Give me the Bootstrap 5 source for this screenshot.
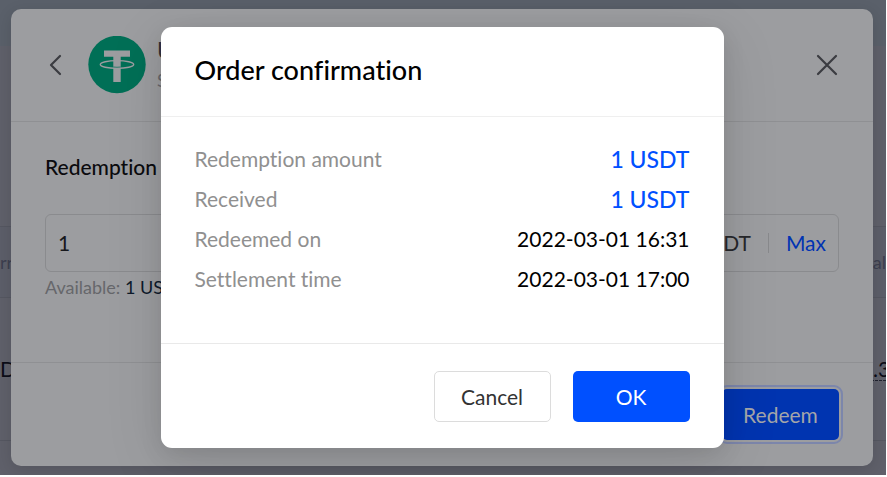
<!DOCTYPE html>
<html lang="en">
<head>
<meta charset="utf-8">
<meta name="viewport" content="width=device-width, initial-scale=1">
<title>Order confirmation</title>
<link href="https://cdn.jsdelivr.net/npm/bootstrap@5.3.0/dist/css/bootstrap.min.css" rel="stylesheet">
<style>
  body { font-family: Lato, "Open Sans", sans-serif; font-size: 21px; line-height: 30px; font-variant-ligatures: none; padding: 0 1px 2px 0; background: #fff; }
  .screen { min-height: calc(100vh - 2px); background: #5f606a; }
  .page-band { height: 46px; background: #5a606a; }
  .page-gap { height: 180px; }
  .holdings { table-layout: fixed; border-top: 1px solid #555761; color: #0c0d18; }
  .holdings th, .holdings td { padding: 0; border-bottom: 1px solid #555761; white-space: nowrap; overflow: hidden; }
  .holdings th { height: 71px; font-size: 18px; font-weight: 400; color: #3c3f4f; background: #5c5e69; }
  .holdings td { height: 143px; }
  .holdings .last-col { width: 15px; }
  .holdings .dashed { border-bottom: 1px dashed #20222e; line-height: 22px; display: block; padding-left: 2px; }
  .window-redeem { position: absolute; top: 9px; left: 11px; right: 13px; border-radius: 10px; background: #9c9da0; box-shadow: 0 4px 16px rgba(0,0,0,.12); }
  .window-order { position: absolute; top: 27px; left: 0; right: 2px; margin: 0 auto; max-width: 563px; border-radius: 11px; background: #fff; overflow: hidden; }
  .order-shadow { box-shadow: 0 14px 60px rgba(0,0,0,.1), 0 6px 22px rgba(0,0,0,.1); }
  .redeem-head { height: 113px; padding: 0 34px; border-bottom: 1px solid #8f9093; }
  .redeem-main { height: 240px; padding: 30px 34px 0; }
  .redeem-foot { padding: 26px 34px; border-top: 1px solid #8f9093; }
  .icon-btn { border: 0; background: none; padding: 0; line-height: 0; color: #3b3c41; }
  .coin { margin: 0 11px 0 22px; }
  .coin-name { font-size: 23px; color: #303136; }
  .coin-note { font-size: 18px; color: #66676b; }
  .label-strong { font-weight: 500; color: #0b0b0e; }
  .amount-box { height: 58px; margin-top: 32px; padding: 0 12px; border: 1px solid #8a8b8e; border-radius: 6px; }
  .amount-box input { border: 0; background: none; outline: 0; padding: 0; min-width: 0; color: #17181c; }
  .amount-box .unit { color: #26272b; }
  .amount-box .rule { width: 1px; height: 20px; margin: 0 17px; background: #88898c; }
  .amount-box button { border: 0; background: none; padding: 0; color: #0033b3; }
  .hint { font-size: 18px; line-height: 30px; color: #66676b; }
  .hint span { color: #0e1a2b; }
  .action { width: 117px; height: 51px; padding: 0; border-radius: 5px; font-size: 21px; line-height: 30px; --bs-btn-padding-x: 0; }
  .action-dim, .action-dim:hover { background: #0034b0; color: #a4a5a9; border: 0; outline: 2px solid #7c86ab; outline-offset: 2px; }
  .action-main, .action-main:hover { background: #0050ff; color: #fff; border: 0; }
  .action-plain, .action-plain:hover { background: #fff; color: #333; border: 1px solid #dcdcdc; }
  .order-head { padding: 28px 34px 31px; border-bottom: 1px solid #efefef; }
  .order-head h1 { font-size: 27px; line-height: 30px; font-weight: 500; color: #000; }
  .order-list { padding: 22px 34px 44px; line-height: 40px; }
  .order-list dt { font-weight: 400; color: #909090; }
  .order-list dd { color: #000; }
  .order-list .value-main { color: #0050ff; font-size: 23px; font-weight: 500; }
  .order-foot { gap: 22px; padding: 27px 34px 26px; border-top: 1px solid #e9e9e9; }
</style>
</head>
<body>
<div class="screen position-relative overflow-hidden">
  <div class="page-band"></div>
  <div class="page-gap"></div>
  <table class="holdings w-100 mb-0">
    <thead><tr><th>rr</th><th class="last-col text-end">al</th></tr></thead>
    <tbody><tr><td>D</td><td><span class="dashed">.3</span></td></tr></tbody>
  </table>

  <section class="window-redeem" aria-label="Redeem">
    <header class="redeem-head d-flex align-items-center">
      <button class="icon-btn" type="button" aria-label="Back">
        <svg width="21" height="24" viewBox="0 0 21 24" fill="none" stroke="currentColor" stroke-width="2.2" stroke-linecap="round" stroke-linejoin="round"><path d="M15 3L6 12l9 9"/></svg>
      </button>
      <svg class="coin flex-shrink-0" width="58" height="58" viewBox="0 0 58 58" aria-hidden="true">
        <circle cx="29" cy="28.5" r="28.7" fill="#006f56"/>
        <ellipse cx="29" cy="28.5" rx="16.7" ry="3.9" fill="none" stroke="#9c9da0" stroke-width="1.4"/>
        <path d="M16 14.5h26v6.3h-9.3V46h-7.4V20.8H16z" fill="#9c9da0"/>
        <path d="M25.3 31q3.7.5 7.4 0" fill="none" stroke="#006f56" stroke-width=".7"/>
      </svg>
      <div class="flex-grow-1">
        <div class="coin-name">USDT</div>
        <div class="coin-note">Savings</div>
      </div>
      <button class="icon-btn" type="button" aria-label="Close">
        <svg width="24" height="24" viewBox="0 0 24 24" fill="none" stroke="currentColor" stroke-width="2.2" stroke-linecap="round"><path d="M3 3l18 18M21 3L3 21"/></svg>
      </button>
    </header>
    <div class="redeem-main">
      <label class="label-strong d-block" for="amount">Redemption amount</label>
      <div class="amount-box d-flex align-items-center">
        <input class="flex-grow-1" id="amount" type="text" value="1">
        <span class="unit">USDT</span>
        <span class="rule"></span>
        <button type="button">Max</button>
      </div>
      <div class="hint">Available: <span>1 USDT</span></div>
    </div>
    <footer class="redeem-foot d-flex justify-content-end">
      <button class="btn action action-dim" type="button">Redeem</button>
    </footer>
  </section>

  <section class="window-order order-shadow" role="dialog" aria-labelledby="order-title">
    <header class="order-head"><h1 class="m-0" id="order-title">Order confirmation</h1></header>
    <dl class="order-list m-0">
      <div class="d-flex justify-content-between"><dt>Redemption amount</dt><dd class="value-main m-0">1 USDT</dd></div>
      <div class="d-flex justify-content-between"><dt>Received</dt><dd class="value-main m-0">1 USDT</dd></div>
      <div class="d-flex justify-content-between"><dt>Redeemed on</dt><dd class="m-0">2022-03-01 16:31</dd></div>
      <div class="d-flex justify-content-between"><dt>Settlement time</dt><dd class="m-0">2022-03-01 17:00</dd></div>
    </dl>
    <footer class="order-foot d-flex justify-content-end">
      <button class="btn action action-plain" type="button">Cancel</button>
      <button class="btn action action-main" type="button">OK</button>
    </footer>
  </section>
</div>
<script src="https://cdn.jsdelivr.net/npm/bootstrap@5.3.0/dist/js/bootstrap.bundle.min.js"></script>
</body>
</html>
